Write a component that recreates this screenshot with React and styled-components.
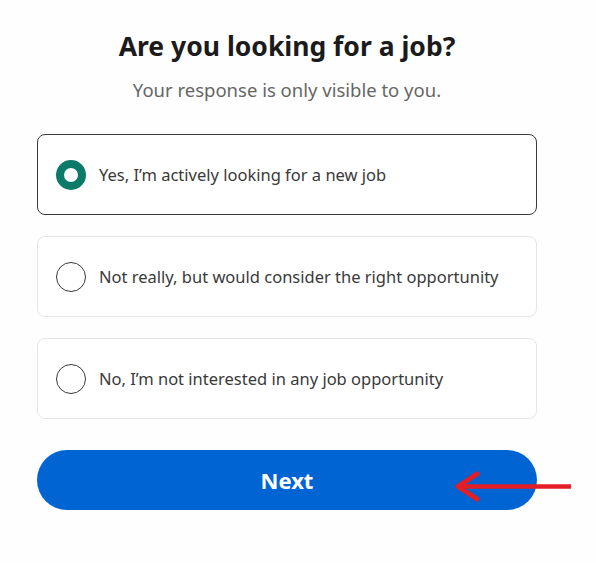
import styled, { createGlobalStyle } from 'styled-components';

const Global = createGlobalStyle`
  body {
    margin: 0;
    background: #fefefe;
    font-family: "Noto Sans", "Open Sans", sans-serif;
  }
`;

const Page = styled.div`
  position: relative;
  width: 596px;
  height: 563px;
  padding: 26px 0 0 37px;
  box-sizing: border-box;
`;

const Column = styled.div`
  width: 500px;
  display: flex;
  flex-direction: column;
`;

const Title = styled.h1`
  margin: 0;
  text-align: center;
  font-size: 26.5px;
  font-weight: 700;
  line-height: 40px;
  color: #1b1b1b;
`;

const Subtitle = styled.p`
  margin: 10px 0 30px;
  text-align: center;
  font-size: 18.5px;
  line-height: 28px;
  color: #666;
`;

const Options = styled.div`
  display: flex;
  flex-direction: column;
  gap: 21px;
`;

const Option = styled.label`
  height: 81px;
  box-sizing: border-box;
  display: flex;
  align-items: center;
  gap: 13px;
  padding: 0 18px;
  border: 1px solid ${(p) => (p.$selected ? '#3a3a3a' : '#e6e6e6')};
  border-radius: 8px;
  background: #fff;
  font-size: 16.5px;
  color: #3a3a3a;
  cursor: pointer;
`;

const Radio = styled.span`
  width: 30px;
  height: 30px;
  box-sizing: border-box;
  border-radius: 50%;
  flex-shrink: 0;
  border: ${(p) => (p.$checked ? '8px solid #0b7a68' : '1.5px solid #3a3a3a')};
  background: #fff;
`;

const Next = styled.button`
  margin-top: 31px;
  height: 60px;
  border: none;
  border-radius: 30px;
  background: #0065d3;
  color: #fff;
  font-family: inherit;
  font-size: 22px;
  font-weight: 700;
  cursor: pointer;
`;

const Arrow = styled.svg`
  position: absolute;
  left: 450px;
  top: 470px;
`;

const options = [
  'Yes, I’m actively looking for a new job',
  'Not really, but would consider the right opportunity',
  'No, I’m not interested in any job opportunity',
];

export default function App() {
  return (
    <Page>
      <Global />
      <Column>
        <Title>Are you looking for a job?</Title>
        <Subtitle>Your response is only visible to you.</Subtitle>
        <Options>
          {options.map((text, i) => (
            <Option key={text} $selected={i === 0}>
              <Radio $checked={i === 0} />
              {text}
            </Option>
          ))}
        </Options>
        <Next>Next</Next>
      </Column>
      <Arrow width="126" height="34" viewBox="0 0 126 34">
        <path d="M121 16.5H8" stroke="#e41e26" strokeWidth="4.5" fill="none" />
        <path d="M27 4L8 16.5L27 29" stroke="#e41e26" strokeWidth="5" fill="none" strokeLinecap="round" strokeLinejoin="round" />
      </Arrow>
    </Page>
  );
}
